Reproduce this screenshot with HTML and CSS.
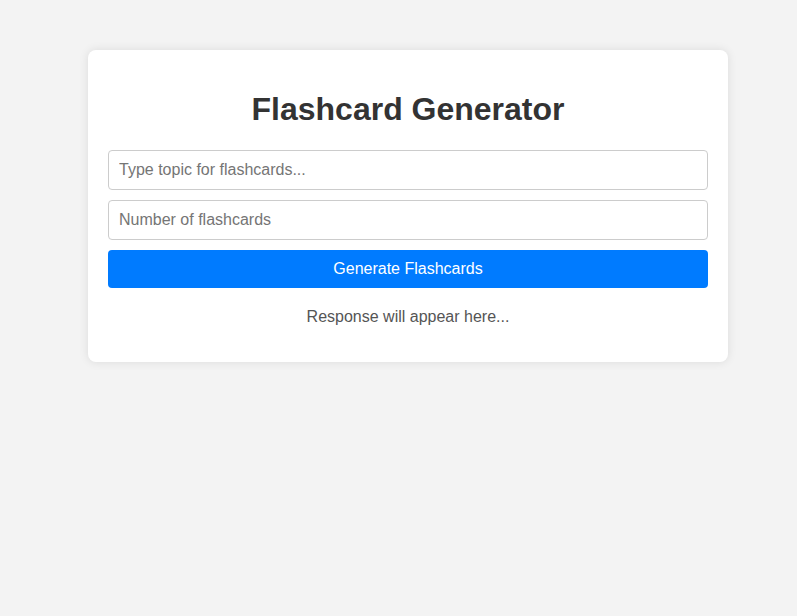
FILE: index.html
```html
<!DOCTYPE html>
<html>
<head>
<meta charset="utf-8">
<link rel="stylesheet" href="styles.css">
</head>
<body>
<div class="card">
  <h1 class="title">Flashcard Generator</h1>
  <input class="field" type="text" placeholder="Type topic for flashcards...">
  <input class="field" type="text" placeholder="Number of flashcards">
  <button class="btn">Generate Flashcards</button>
  <div class="response">Response will appear here...</div>
</div>
</body>
</html>
```
FILE: styles.css
```css
html, body {
  margin: 0;
  padding: 0;
}
body {
  background: #f3f3f3;
  font-family: "Liberation Sans", Arial, sans-serif;
  padding: 50px 0 0 19px;
  min-height: 566px;
}
.card {
  width: 600px;
  margin: 0 auto;
  background: #fff;
  padding: 20px;
  border-radius: 8px;
  box-shadow: 0 0 10px rgba(0,0,0,0.1);
  display: flex;
  flex-direction: column;
}
.title {
  margin: 21px 0 22px;
  font-size: 32px;
  line-height: 37px;
  text-align: center;
  color: #333;
}
.field {
  box-sizing: border-box;
  width: 100%;
  height: 40px;
  padding: 10px;
  margin: 0 0 10px;
  border: 1px solid #ccc;
  border-radius: 4px;
  font-family: "Liberation Sans", Arial, sans-serif;
  font-size: 16px;
  color: #333;
}
.field::placeholder {
  color: #757575;
}
.btn {
  height: 38px;
  padding: 0;
  border: none;
  border-radius: 4px;
  background: #007bff;
  color: #fff;
  font-family: "Liberation Sans", Arial, sans-serif;
  font-size: 16px;
}
.response {
  margin-top: 20px;
  padding-bottom: 16px;
  text-align: center;
  font-size: 16px;
  line-height: 18px;
  color: #555;
}
```
